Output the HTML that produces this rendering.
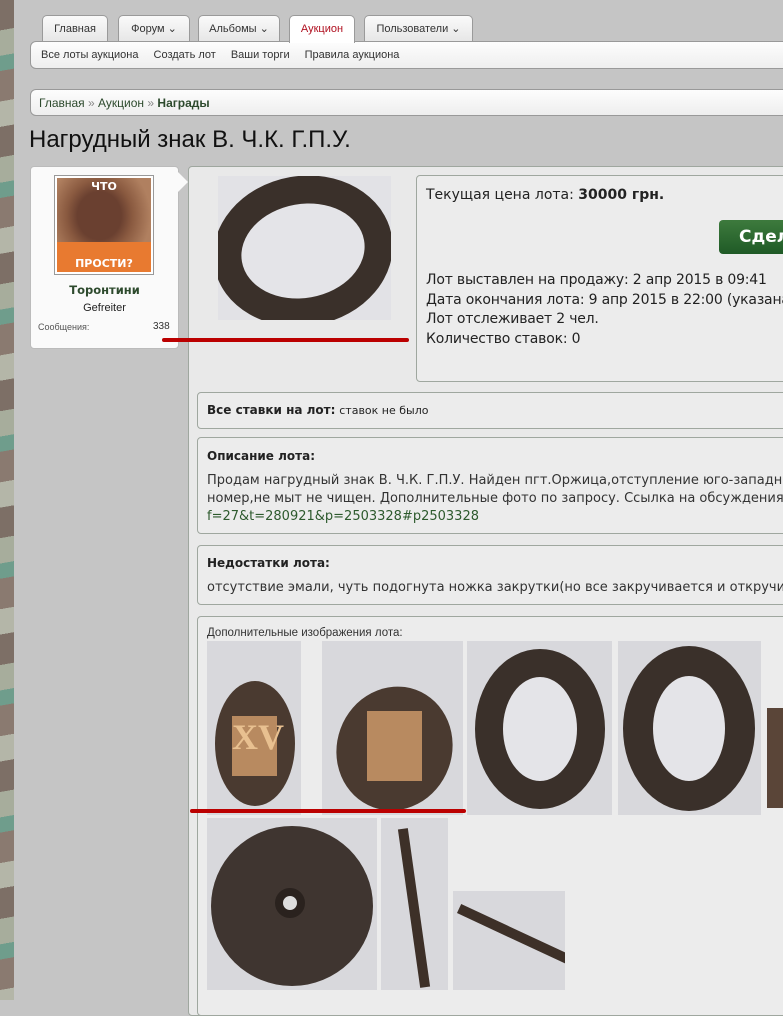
<!DOCTYPE html>
<html><head><meta charset="utf-8"><style>
*{box-sizing:border-box;margin:0;padding:0}
body{width:783px;height:1000px;overflow:hidden;background:#c5c5c5;font-family:"DejaVu Sans","Liberation Sans",sans-serif;position:relative;color:#222}
.camo{position:absolute;left:0;top:0;width:14px;height:1000px;background:repeating-linear-gradient(170deg,#7d6f66 0 30px,#a7ad9c 30px 55px,#6f9d8c 55px 70px,#8a7a70 70px 100px,#b4b6a8 100px 125px)}
.a{position:absolute}
.lib{font-family:"Liberation Sans",sans-serif}
.tab{position:absolute;top:15px;height:27px;background:linear-gradient(#fafafa,#e6e6e6);border:1px solid #9a9a9a;border-bottom:none;border-radius:5px 5px 0 0;font-size:11px;color:#333;text-align:center;line-height:26px;white-space:nowrap;font-family:"Liberation Sans",sans-serif}
.bar{position:absolute;left:30px;width:760px;background:linear-gradient(#fdfdfd,#eeeeee);border:1px solid #999;border-radius:6px;font-size:11px;white-space:nowrap;font-family:"Liberation Sans",sans-serif}
.box{position:absolute;background:#ececec;border:1px solid #9fa79f;border-radius:4px}
.img{position:absolute;background:#d8d8dc;overflow:hidden}
.ring{position:absolute;border-radius:50%;border:solid #3a302a;background:#e4e4e8}
.red{position:absolute;height:4px;background:#b00;border-radius:2px}
</style></head><body>
<div class="camo"></div>
<div class="tab" style="left:42px;width:66px">Главная</div>
<div class="tab" style="left:118px;width:72px">Форум ⌄</div>
<div class="tab" style="left:198px;width:82px">Альбомы ⌄</div>
<div class="tab" style="left:289px;width:66px;background:#fff;color:#b01020;height:28px;z-index:2">Аукцион</div>
<div class="tab" style="left:364px;width:109px">Пользователи ⌄</div>
<div class="bar" style="top:41px;height:28px;line-height:27px;padding-left:10px;color:#333"><span style="margin-right:15px">Все лоты аукциона</span><span style="margin-right:15px">Создать лот</span><span style="margin-right:15px">Ваши торги</span>Правила аукциона</div>
<div class="bar" style="top:89px;height:27px;line-height:26px;padding-left:8px;font-size:12px;color:#2d4a2d">Главная <span style="color:#888">»</span> Аукцион <span style="color:#888">»</span> <b>Награды</b></div>
<div class="a lib" style="left:29px;top:126px;font-size:24px;color:#111">Нагрудный знак В. Ч.К. Г.П.У.</div>

<div class="a" style="left:30px;top:166px;width:149px;height:183px;background:#fafafa;border:1px solid #bbb;border-radius:4px"></div>
<div class="a" style="left:178px;top:172px;width:0;height:0;border-top:10px solid transparent;border-bottom:10px solid transparent;border-left:10px solid #fafafa"></div>
<div class="a" style="left:54px;top:175px;width:100px;height:100px;border:1px solid #999;padding:2px;background:#fff"><div style="width:100%;height:100%;background:radial-gradient(ellipse at 45% 40%,#6a4030 0 30%,#8a5a40 45%,#b08060 70%);position:relative"><div style="position:absolute;bottom:0;left:0;right:0;height:30px;background:#e87a30"></div><div style="position:absolute;top:2px;width:100%;text-align:center;color:#fff;font-weight:bold;font-size:11px">ЧТО</div><div style="position:absolute;bottom:2px;width:100%;text-align:center;color:#fff;font-weight:bold;font-size:11px">ПРОСТИ?</div></div></div>
<div class="a" style="left:30px;top:283px;width:149px;text-align:center;font-weight:bold;font-size:11.5px;color:#2d4a2d">Торонтини</div>
<div class="a lib" style="left:30px;top:302px;width:149px;text-align:center;font-size:11px">Gefreiter</div>
<div class="a lib" style="left:38px;top:322px;font-size:9px;color:#555">Сообщения:</div>
<div class="a lib" style="left:153px;top:321px;font-size:10px;color:#333">338</div>

<div class="a" style="left:188px;top:166px;width:610px;height:850px;background:#e9e9e9;border:1px solid #9fa79f;border-radius:4px"></div>
<div class="img" style="left:218px;top:176px;width:173px;height:144px;background:#e2e2e6"><div class="ring" style="left:-5px;top:0;width:180px;height:150px;border-width:28px;transform:rotate(-10deg)"></div></div>
<div class="box" style="left:416px;top:175px;width:380px;height:207px"></div>
<div class="a" style="left:426px;top:187px;font-size:14px;white-space:nowrap">Текущая цена лота: <b>30000 грн.</b></div>
<div class="a" style="left:719px;top:220px;width:80px;height:34px;background:linear-gradient(#3d7a3d,#1f5a26);border-radius:4px;color:#fff;font-weight:bold;font-size:17px;line-height:34px;padding-left:20px">Сдел</div>
<div class="a" style="left:426px;top:271px;font-size:14px;line-height:19.5px;white-space:nowrap;letter-spacing:-0.2px">Лот выставлен на продажу: 2 апр 2015 в 09:41<br>Дата окончания лота: 9 апр 2015 в 22:00 (указана<br>Лот отслеживает 2 чел.<br>Количество ставок: 0</div>
<div class="red" style="left:162px;top:338px;width:247px"></div>

<div class="box" style="left:197px;top:392px;width:600px;height:37px"></div>
<div class="a" style="left:207px;top:403px;font-size:12px"><b>Все ставки на лот:</b> <span style="font-size:11px">ставок не было</span></div>
<div class="box" style="left:197px;top:437px;width:600px;height:97px"></div>
<div class="a" style="left:207px;top:449px;font-size:12px;font-weight:bold">Описание лота:</div>
<div class="a" style="left:207px;top:472px;font-size:13px;line-height:18px;white-space:nowrap;color:#333">Продам нагрудный знак В. Ч.К. Г.П.У. Найден пгт.Оржица,отступление юго-западн<br>номер,не мыт не чищен. Дополнительные фото по запросу. Ссылка на обсуждения<br><span style="color:#2d5a2d">f=27&amp;t=280921&amp;p=2503328#p2503328</span></div>
<div class="box" style="left:197px;top:545px;width:600px;height:60px"></div>
<div class="a" style="left:207px;top:556px;font-size:12px;font-weight:bold">Недостатки лота:</div>
<div class="a" style="left:207px;top:580px;font-size:13px;white-space:nowrap;color:#333">отсутствие эмали, чуть подогнута ножка закрутки(но все закручивается и откручи</div>
<div class="box" style="left:197px;top:616px;width:600px;height:400px"></div>
<div class="a lib" style="left:207px;top:627px;font-size:11.5px;color:#333">Дополнительные изображения лота:</div>

<div class="img" style="left:207px;top:641px;width:94px;height:174px"><div class="a" style="left:8px;top:40px;width:80px;height:125px;border-radius:50%;background:#4a3a30"></div><div class="a" style="left:25px;top:75px;width:45px;height:60px;background:#b88a60;color:#e8c090;font:bold 36px 'Liberation Serif',serif;text-align:center">XV</div></div>
<div class="img" style="left:322px;top:641px;width:141px;height:174px"><div class="a" style="left:15px;top:45px;width:115px;height:125px;border-radius:50%;background:#4a3a30;transform:rotate(20deg)"></div><div class="a" style="left:45px;top:70px;width:55px;height:70px;background:#b88a60"></div></div>
<div class="img" style="left:467px;top:641px;width:145px;height:174px"><div class="ring" style="left:8px;top:8px;width:130px;height:160px;border-width:28px"></div></div>
<div class="img" style="left:618px;top:641px;width:143px;height:174px"><div class="ring" style="left:5px;top:5px;width:132px;height:165px;border-width:30px"></div></div>
<div class="img" style="left:767px;top:708px;width:20px;height:100px;background:#5a4538"></div>
<div class="red" style="left:190px;top:809px;width:276px"></div>
<div class="img" style="left:207px;top:818px;width:170px;height:172px"><div class="a" style="left:4px;top:8px;width:162px;height:160px;border-radius:50%;background:#3f3530"></div><div class="a" style="left:68px;top:70px;width:30px;height:30px;border-radius:50%;background:#ddd;border:8px solid #2a221e"></div></div>
<div class="img" style="left:381px;top:818px;width:67px;height:172px"><div class="a" style="left:28px;top:10px;width:10px;height:160px;background:#3d3028;transform:rotate(-8deg)"></div></div>
<div class="img" style="left:453px;top:891px;width:112px;height:99px"><div class="a" style="left:0;top:40px;width:130px;height:10px;background:#3d3028;transform:rotate(25deg)"></div></div>
</body></html>
